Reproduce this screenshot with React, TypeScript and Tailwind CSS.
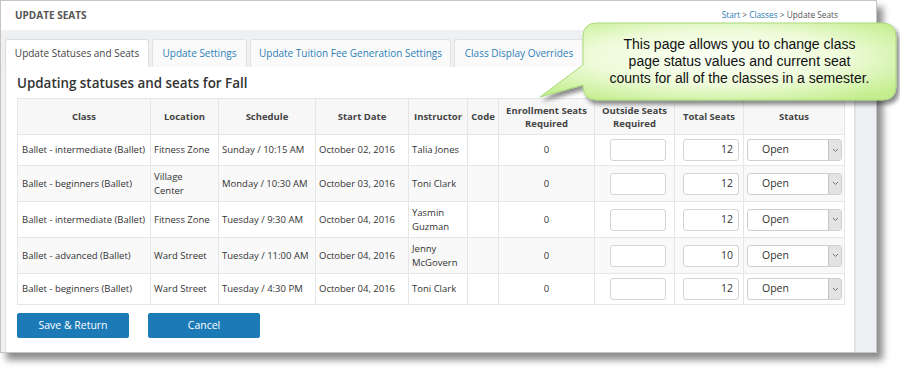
import React from "react";

const rows = [
  { cls: "Ballet - intermediate (Ballet)", loc: "Fitness Zone", sched: "Sunday / 10:15 AM", start: "October 02, 2016", inst: "Talia Jones", total: "12" },
  { cls: "Ballet - beginners (Ballet)", loc: "Village Center", sched: "Monday / 10:30 AM", start: "October 03, 2016", inst: "Toni Clark", total: "12" },
  { cls: "Ballet - intermediate (Ballet)", loc: "Fitness Zone", sched: "Tuesday / 9:30 AM", start: "October 04, 2016", inst: "Yasmin Guzman", total: "12" },
  { cls: "Ballet - advanced (Ballet)", loc: "Ward Street", sched: "Tuesday / 11:00 AM", start: "October 04, 2016", inst: "Jenny McGovern", total: "10" },
  { cls: "Ballet - beginners (Ballet)", loc: "Ward Street", sched: "Tuesday / 4:30 PM", start: "October 04, 2016", inst: "Toni Clark", total: "12" },
];

const widths = [133, 68, 97, 93, 59, 31, 96, 80, 69, 101];

function Callout() {
  return (
    <div className="absolute left-[530px] top-[15px] w-[370px] h-[95px]">
      <svg width="370" height="95" viewBox="0 0 370 95" className="absolute left-0 top-0">
        <defs>
          <radialGradient id="bubble" cx="50%" cy="45%" r="65%">
            <stop offset="0%" stopColor="#fcfff7" />
            <stop offset="55%" stopColor="#eefbd9" />
            <stop offset="100%" stopColor="#c4ee8e" />
          </radialGradient>
          <filter id="shadow" x="-10%" y="-10%" width="120%" height="130%">
            <feDropShadow dx="3" dy="4" stdDeviation="2" floodColor="#000" floodOpacity="0.45" />
          </filter>
        </defs>
        <path
          d="M67 8 H352 Q366 8 366 22 V71 Q366 85 352 85 H67 Q53 85 53 71 V70 L10 82 L53 50 V22 Q53 8 67 8 Z"
          fill="url(#bubble)"
          stroke="#a9d97a"
          strokeWidth="1"
          filter="url(#shadow)"
        />
      </svg>
      <div className="absolute left-[53px] top-[21px] w-[313px] text-center text-[14px] leading-[17px] text-[#111] font-['Liberation_Sans',Arial,sans-serif]">
        This page allows you to change class<br />
        page status values and current seat<br />
        counts for all of the classes in a semester.
      </div>
    </div>
  );
}

export default function App() {
  return (
    <div className="relative w-[900px] h-[376px] bg-white font-['Open_Sans',sans-serif] overflow-hidden">
      <div className="flex flex-col w-[877px] h-[353px] border border-[#c4c4c4] bg-[#eff0f2] shadow-[6px_7px_7px_rgba(0,0,0,0.45)]">
        <div className="flex items-center justify-between h-[29px] bg-white pl-[14px] pr-[38px]">
          <span className="text-[10px] font-bold text-[#555]">UPDATE SEATS</span>
          <span className="text-[8.3px] text-[#555]">
            <span className="text-[#2a7ab5]">Start</span> &gt; <span className="text-[#2a7ab5]">Classes</span> &gt; Update Seats
          </span>
        </div>
        <div className="flex flex-1">
          <div className="flex flex-col flex-1 pl-[4px] pt-[9px]">
            <div className="flex gap-[3px] h-[28px] text-[10px]">
              <div className="w-[144px] flex items-center justify-center bg-white border border-b-0 border-[#dcdcdc] rounded-t-[3px] text-[#444]">Update Statuses and Seats</div>
              <div className="w-[95px] flex items-center justify-center bg-[#fafafa] border border-b-0 border-[#e2e2e2] rounded-t-[3px] text-[#2e7fb8]">Update Settings</div>
              <div className="w-[201px] flex items-center justify-center bg-[#fafafa] border border-b-0 border-[#e2e2e2] rounded-t-[3px] text-[#2e7fb8]">Update Tuition Fee Generation Settings</div>
              <div className="w-[130px] flex items-center justify-center bg-[#fafafa] border border-b-0 border-[#e2e2e2] rounded-t-[3px] text-[#2e7fb8]">Class Display Overrides</div>
            </div>
            <div className="flex-1 bg-white border-l border-r border-[#e0e0e0] pl-[11px] pr-[9px]">
              <h1 className="text-[13.4px] font-semibold text-[#333] h-[31px] leading-[33px]">Updating statuses and seats for Fall</h1>
              <table className="table-fixed border-collapse w-[827px] text-[9.5px] text-[#333]">
                <colgroup>
                  {widths.map((w, i) => (
                    <col key={i} style={{ width: w }} />
                  ))}
                </colgroup>
                <thead>
                  <tr className="h-[36px] bg-[#f7f7f7] font-bold text-[#444] leading-[13px]">
                    <th className="border border-[#e6e6e6] text-center">Class</th>
                    <th className="border border-[#e6e6e6] text-center">Location</th>
                    <th className="border border-[#e6e6e6] text-center">Schedule</th>
                    <th className="border border-[#e6e6e6] text-center">Start Date</th>
                    <th className="border border-[#e6e6e6] text-center">Instructor</th>
                    <th className="border border-[#e6e6e6] text-center">Code</th>
                    <th className="border border-[#e6e6e6] text-center">Enrollment Seats Required</th>
                    <th className="border border-[#e6e6e6] text-center px-[6px]">Outside Seats Required</th>
                    <th className="border border-[#e6e6e6] text-center">Total Seats</th>
                    <th className="border border-[#e6e6e6] text-center">Status</th>
                  </tr>
                </thead>
                <tbody>
                  {rows.map((r, i) => (
                    <tr key={i} className={`h-[31px] leading-[13.5px] ${i % 2 === 1 ? "bg-[#f9f9f9]" : "bg-white"}`}>
                      <td className="border border-[#e6e6e6] px-[4px] py-[4px]">{r.cls}</td>
                      <td className="border border-[#e6e6e6] pl-[3px] pr-[6px] py-[4px]">{r.loc}</td>
                      <td className="border border-[#e6e6e6] px-[3px] py-[4px]">{r.sched}</td>
                      <td className="border border-[#e6e6e6] px-[3px] py-[4px]">{r.start}</td>
                      <td className="border border-[#e6e6e6] px-[3px] py-[4px]">{r.inst}</td>
                      <td className="border border-[#e6e6e6]"></td>
                      <td className="border border-[#e6e6e6] text-center">0</td>
                      <td className="border border-[#e6e6e6]">
                        <div className="ml-[15px] w-[56px] h-[22px] bg-white border border-[#d4d4d4] rounded-[3px]" />
                      </td>
                      <td className="border border-[#e6e6e6]">
                        <div className="ml-[8px] w-[56px] h-[22px] bg-white border border-[#d4d4d4] rounded-[3px] flex items-center justify-end pr-[5px] text-[10.5px] text-[#333]">{r.total}</div>
                      </td>
                      <td className="border border-[#e6e6e6]">
                        <div className="ml-[3px] w-[95px] h-[22px] bg-white border border-[#cfcfcf] rounded-[3px] flex items-center">
                          <span className="flex-1 pl-[14px] text-[10.5px] text-[#333]">Open</span>
                          <span className="w-[13px] h-[20px] bg-[#e3e3e3] border-l border-[#c4c4c4] rounded-r-[2px] flex items-center justify-center">
                            <svg width="7" height="5" viewBox="0 0 7 5">
                              <path d="M1 1 L3.5 3.5 L6 1" fill="none" stroke="#777" strokeWidth="1" />
                            </svg>
                          </span>
                        </div>
                      </td>
                    </tr>
                  ))}
                </tbody>
              </table>
              <div className="flex gap-[19px] mt-[8px]">
                <button className="w-[112px] h-[25px] bg-[#1c7bb7] text-white text-[10.5px] rounded-[2px]">Save &amp; Return</button>
                <button className="w-[112px] h-[25px] bg-[#1c7bb7] text-white text-[10.5px] rounded-[2px]">Cancel</button>
              </div>
            </div>
          </div>
          <div className="w-[22px] bg-[#eef0f3] border-l border-[#e2e4e8]" />
        </div>
      </div>
      <Callout />
    </div>
  );
}
